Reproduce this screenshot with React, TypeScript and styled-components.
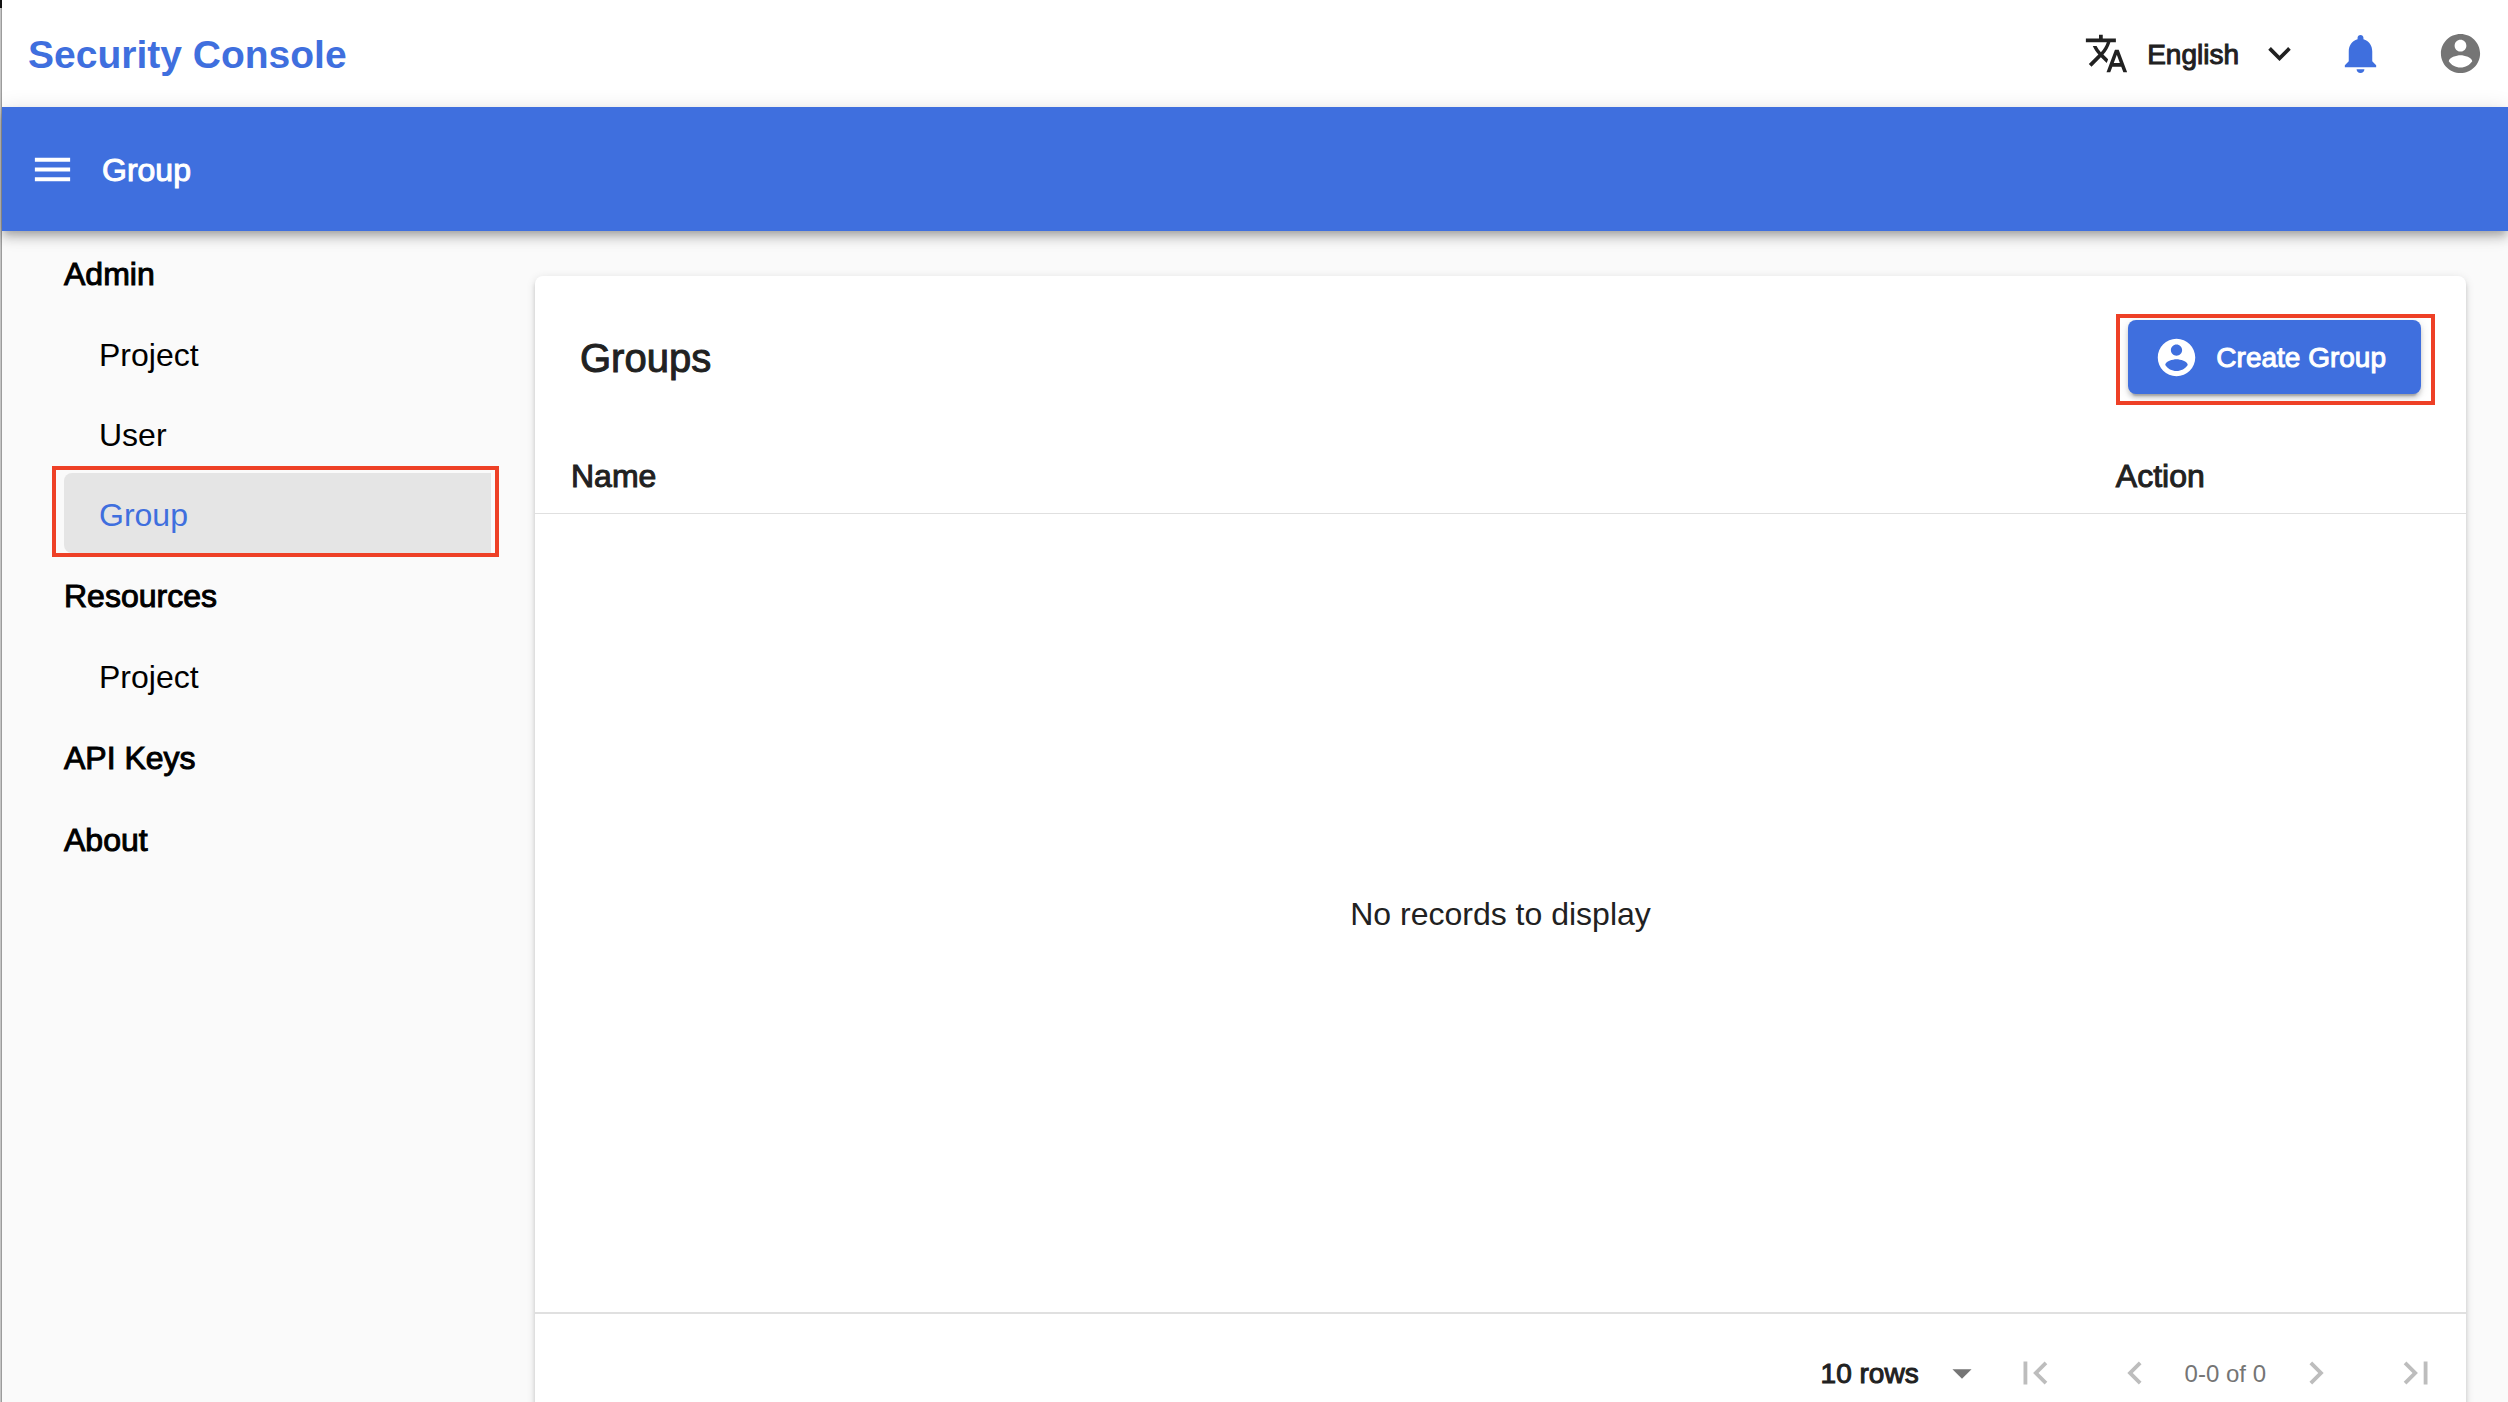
import React from "react";
import styled, { createGlobalStyle, css } from "styled-components";

const blue = "#3f6fde";
const ink = "#212121";
const muted = "#757575";
const red = "#ee4026";

const GlobalStyle = createGlobalStyle`
  * { box-sizing: border-box; }
  body {
    margin: 0;
    background: #fafafa;
    color: ${ink};
    font-family: "Helvetica Neue", "Liberation Sans", Arial, sans-serif;
    font-size: 32px;
  }
  button, select { font: inherit; color: inherit; border: 0; background: none; padding: 0; margin: 0; cursor: pointer; }
  a { color: inherit; text-decoration: none; }
`;

/* Medium weight, between the regular and the bold face */
const medium = css`
  font-weight: 400;
  -webkit-text-stroke: 1px currentColor;
`;

/* The window edge: a dark corner above a two-tone grey line */
const Shell = styled.div`
  display: flex;
  flex-direction: column;
  height: 100vh;
  overflow: hidden;
  padding-left: 2px;
  background:
    linear-gradient(#111, #111) 0 0 / 2px 8px no-repeat,
    linear-gradient(90deg, #c4c4c4 1px, #9c9c9c 1px) 0 0 / 2px 100% no-repeat;
`;

const Header = styled.header`
  flex: none;
  display: flex;
  align-items: center;
  justify-content: space-between;
  height: 107px;
  padding: 0 2px 0 26px;
  background: #fff;
`;

const Brand = styled.a`
  padding-top: 2px;
  color: ${blue};
  font-size: 39px;
  font-weight: 700;
`;

const HeaderActions = styled.div`
  display: flex;
  align-items: center;
  gap: 9px;
`;

const LanguageButton = styled.button`
  display: flex;
  align-items: center;
  gap: 18px;
  padding-right: 4px;
  font-size: 28px;
  ${medium}
`;

const ButtonLabel = styled.span`
  padding-top: 2px;
`;

const IconButton = styled.button<{ $tone: string }>`
  display: flex;
  padding: 22px;
  color: ${(p) => p.$tone};
`;

const AppBar = styled.div`
  position: relative;
  z-index: 1;
  flex: none;
  display: flex;
  align-items: center;
  height: 124px;
  gap: 4px;
  padding-left: 5px;
  background: ${blue};
  color: #fff;
  box-shadow: 0 4px 8px -2px rgba(0, 0, 0, 0.2), 0 8px 10px rgba(0, 0, 0, 0.14),
    0 2px 20px rgba(0, 0, 0, 0.12);
`;

const BarTitle = styled.h1`
  margin: 0;
  padding-top: 2px;
  font-size: 32px;
  ${medium}
`;

const Body = styled.div`
  display: flex;
  align-items: flex-start;
  gap: 44px;
  padding: 0 42px 0 62px;
`;

const Sidebar = styled.nav`
  flex: none;
  display: flex;
  flex-direction: column;
  width: 427px;
  color: #000;
`;

const Section = styled.a`
  display: flex;
  align-items: center;
  height: 82px;
  padding-top: 4px;
  ${medium}
`;

const Item = styled.a<{ $active?: boolean }>`
  display: flex;
  align-items: center;
  height: 80px;
  padding: 4px 0 0 35px;
  border-radius: 8px 0 0 8px;
  ${(p) => p.$active && css`
    position: relative;
    background: #e5e5e5;
    color: ${blue};
    &::after {
      content: "";
      position: absolute;
      inset: -7px -8px -4px -12px;
      border: 4px solid ${red};
    }
  `}
`;

const Card = styled.main`
  flex: 1;
  min-width: 0;
  margin-top: 45px;
  background: #fff;
  border-radius: 8px;
  box-shadow: 0 6px 2px -4px rgba(0, 0, 0, 0.2), 0 4px 4px rgba(0, 0, 0, 0.14),
    0 2px 10px rgba(0, 0, 0, 0.12);
`;

const Toolbar = styled.div`
  display: flex;
  align-items: center;
  justify-content: space-between;
  height: 162px;
  padding: 0 45px;
`;

const CardTitle = styled.h2`
  margin: 0;
  padding-top: 2px;
  font-size: 40px;
  ${medium}
`;

const CreateButton = styled.button`
  position: relative;
  display: flex;
  align-items: center;
  gap: 17px;
  height: 74px;
  padding: 0 35px 0 26px;
  border-radius: 8px;
  background: ${blue};
  color: #fff;
  font-size: 28px;
  ${medium}
  box-shadow: 0 6px 2px -4px rgba(0, 0, 0, 0.2), 0 4px 4px rgba(0, 0, 0, 0.14),
    0 2px 10px rgba(0, 0, 0, 0.12);
  &::after {
    content: "";
    position: absolute;
    inset: -6px -14px -11px -12px;
    border: 4px solid ${red};
  }
`;

const Table = styled.table`
  width: 100%;
  table-layout: fixed;
  border-collapse: separate;
  border-spacing: 0;
`;

const HeadCell = styled.th<{ $width: string }>`
  width: ${(p) => p.$width};
  height: 76px;
  padding: 2px 36px 0;
  border-bottom: 1px solid #e0e0e0;
  text-align: left;
  ${medium}
`;

const EmptyCell = styled.td`
  height: 800px;
  padding: 2px 0 0;
  border-bottom: 2px solid #e0e0e0;
  text-align: center;
`;

const Pager = styled.div`
  display: flex;
  align-items: center;
  justify-content: flex-end;
  height: 118px;
`;

const RowsPicker = styled.label`
  display: grid;
  grid-template-columns: 118px 46px;
  align-items: center;
  svg { grid-area: 1 / 2; color: ${muted}; pointer-events: none; }
`;

const RowsSelect = styled.select`
  grid-area: 1 / 1 / 2 / 3;
  appearance: none;
  height: 60px;
  font-size: 28px;
  ${medium}
`;

const PageButton = styled.button`
  display: flex;
  justify-content: center;
  width: 100px;
  padding: 22px 0;
  color: #bdbdbd;
`;

const PageRange = styled.span`
  padding-top: 2px;
  color: ${muted};
  font-size: 24px;
`;

const paths = {
  translate:
    "M12.87 15.07l-2.54-2.51.03-.03c1.74-1.94 2.98-4.17 3.71-6.53H17V4h-7V2H8v2H1v1.99h11.17C11.5 7.92 10.44 9.75 9 11.35 8.07 10.32 7.3 9.19 6.69 8h-2c.73 1.63 1.73 3.17 2.98 4.56l-5.09 5.02L4 19l5-5 3.11 3.11.76-2.04zM18.5 10h-2L12 22h2l1.12-3h4.75L21 22h2l-4.5-12zm-2.62 7l1.62-4.33L19.12 17h-3.24z",
  expand: "M16.59 8.59L12 13.17 7.41 8.59 6 10l6 6 6-6z",
  bell: "M12 22c1.1 0 2-.9 2-2h-4c0 1.1.89 2 2 2zm6-6v-5c0-3.07-1.64-5.64-4.5-6.32V4c0-.83-.67-1.5-1.5-1.5s-1.5.67-1.5 1.5v.68C7.63 5.36 6 7.92 6 11v5l-2 2v1h16v-1l-2-2z",
  account:
    "M12 2C6.48 2 2 6.48 2 12s4.48 10 10 10 10-4.48 10-10S17.52 2 12 2zm0 3c1.66 0 3 1.34 3 3s-1.34 3-3 3-3-1.34-3-3 1.34-3 3-3zm0 14.2c-2.5 0-4.71-1.28-6-3.22.03-1.99 4-3.08 6-3.08 1.99 0 5.97 1.09 6 3.08-1.29 1.94-3.5 3.22-6 3.22z",
  menu: "M3 18h18v-2H3v2zm0-5h18v-2H3v2zm0-7v2h18V6H3z",
  caret: "M7 10l5 5 5-5z",
  first: "M18.41 16.59L13.82 12l4.59-4.59L17 6l-6 6 6 6zM6 6h2v12H6z",
  prev: "M15.41 7.41L14 6l-6 6 6 6 1.41-1.41L10.83 12z",
  next: "M10 6L8.59 7.41 13.17 12l-4.58 4.59L10 18l6-6z",
  last: "M5.59 7.41L10.18 12l-4.59 4.59L7 18l6-6-6-6zM16 6h2v12h-2z",
};

function Icon({ name, size = 47 }: { name: keyof typeof paths; size?: number }) {
  return (
    <svg width={size} height={size} viewBox="0 0 24 24" fill="currentColor" aria-hidden="true">
      <path d={paths[name]} />
    </svg>
  );
}

export default function App() {
  return (
    <>
      <GlobalStyle />
      <Shell>
        <Header>
          <Brand href="#">Security Console</Brand>
          <HeaderActions>
            <LanguageButton type="button">
              <Icon name="translate" size={45} />
              <ButtonLabel>English</ButtonLabel>
              <Icon name="expand" size={45} />
            </LanguageButton>
            <IconButton type="button" $tone={blue} aria-label="Notifications">
              <Icon name="bell" />
            </IconButton>
            <IconButton type="button" $tone={muted} aria-label="Account">
              <Icon name="account" />
            </IconButton>
          </HeaderActions>
        </Header>
        <AppBar>
          <IconButton type="button" $tone="#fff" aria-label="Menu">
            <Icon name="menu" />
          </IconButton>
          <BarTitle>Group</BarTitle>
        </AppBar>
        <Body>
          <Sidebar>
            <Section href="#admin">Admin</Section>
            <Item href="#admin-project">Project</Item>
            <Item href="#user">User</Item>
            <Item href="#group" $active aria-current="page">Group</Item>
            <Section href="#resources">Resources</Section>
            <Item href="#resource-project">Project</Item>
            <Section href="#api-keys">API Keys</Section>
            <Section href="#about">About</Section>
          </Sidebar>
          <Card>
            <Toolbar>
              <CardTitle>Groups</CardTitle>
              <CreateButton type="button">
                <Icon name="account" size={45} />
                <ButtonLabel>Create Group</ButtonLabel>
              </CreateButton>
            </Toolbar>
            <Table>
              <thead>
                <tr>
                  <HeadCell scope="col" $width="80%">Name</HeadCell>
                  <HeadCell scope="col" $width="20%">Action</HeadCell>
                </tr>
              </thead>
              <tbody>
                <tr>
                  <EmptyCell colSpan={2}>No records to display</EmptyCell>
                </tr>
              </tbody>
            </Table>
            <Pager>
              <RowsPicker>
                <RowsSelect aria-label="Rows per page" defaultValue="10">
                  <option value="10">10 rows</option>
                </RowsSelect>
                <Icon name="caret" size={46} />
              </RowsPicker>
              <PageButton type="button" aria-label="First page"><Icon name="first" size={46} /></PageButton>
              <PageButton type="button" aria-label="Previous page"><Icon name="prev" size={46} /></PageButton>
              <PageRange>0-0 of 0</PageRange>
              <PageButton type="button" aria-label="Next page"><Icon name="next" size={46} /></PageButton>
              <PageButton type="button" aria-label="Last page"><Icon name="last" size={46} /></PageButton>
            </Pager>
          </Card>
        </Body>
      </Shell>
    </>
  );
}
